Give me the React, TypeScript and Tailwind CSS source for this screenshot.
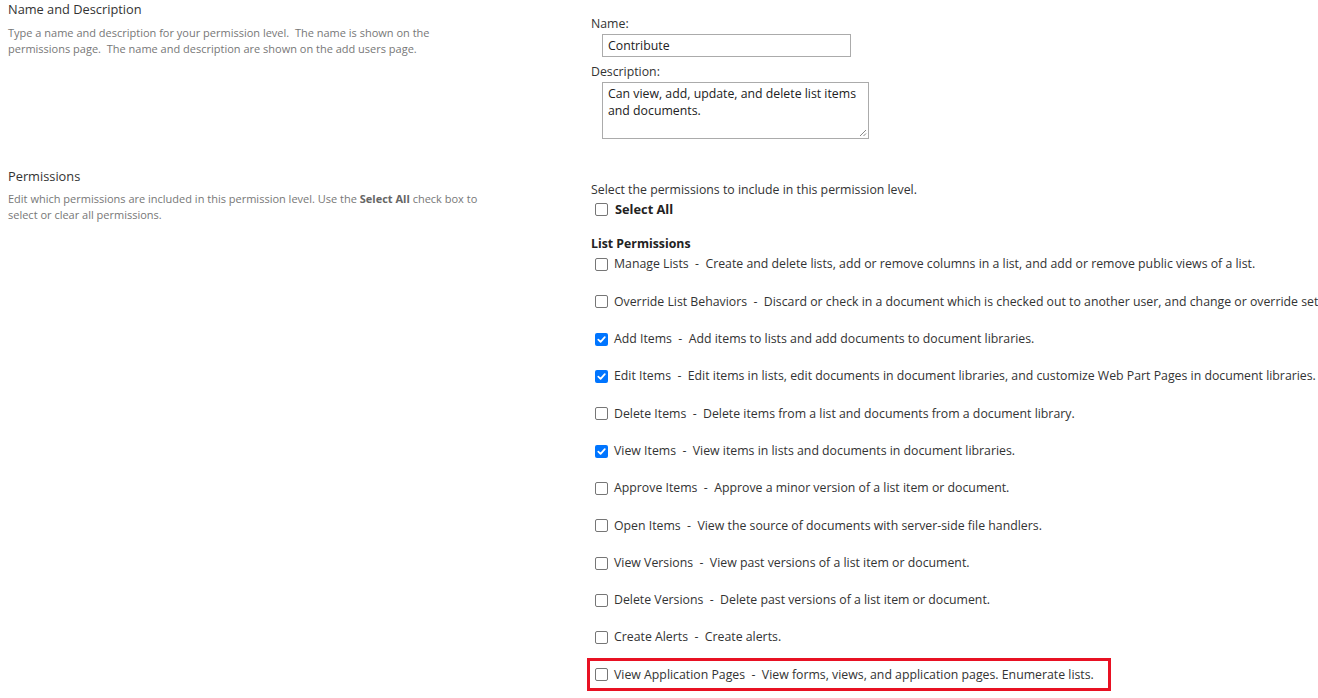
import React from "react";

const perms = [
  { name: "Manage Lists", desc: "Create and delete lists, add or remove columns in a list, and add or remove public views of a list.", on: false },
  { name: "Override List Behaviors", desc: "Discard or check in a document which is checked out to another user, and change or override settings which allow users to read/edit only their own items.", on: false },
  { name: "Add Items", desc: "Add items to lists and add documents to document libraries.", on: true },
  { name: "Edit Items", desc: "Edit items in lists, edit documents in document libraries, and customize Web Part Pages in document libraries.", on: true },
  { name: "Delete Items", desc: "Delete items from a list and documents from a document library.", on: false },
  { name: "View Items", desc: "View items in lists and documents in document libraries.", on: true },
  { name: "Approve Items", desc: "Approve a minor version of a list item or document.", on: false },
  { name: "Open Items", desc: "View the source of documents with server-side file handlers.", on: false },
  { name: "View Versions", desc: "View past versions of a list item or document.", on: false },
  { name: "Delete Versions", desc: "Delete past versions of a list item or document.", on: false },
  { name: "Create Alerts", desc: "Create alerts.", on: false },
];

function Box({ on }: { on: boolean }) {
  if (on) {
    return (
      <span className="flex h-[13px] w-[13px] shrink-0 items-center justify-center rounded-[2px] bg-[#0075ff]">
        <svg viewBox="0 0 12 12" className="h-[11px] w-[11px]">
          <path d="M2.5 6.2 L5 8.6 L9.6 3.4" fill="none" stroke="#fff" strokeWidth="1.9" strokeLinecap="round" strokeLinejoin="round" />
        </svg>
      </span>
    );
  }
  return <span className="h-[13px] w-[13px] shrink-0 rounded-[2px] border border-[#767676] bg-white" />;
}

function Row({ name, desc, on }: { name: string; desc: string; on: boolean }) {
  return (
    <div className="flex h-[37.3px] items-center gap-[6px] pl-[4px] whitespace-nowrap">
      <Box on={on} />
      <span>
        {name}&nbsp;&nbsp;-&nbsp;&nbsp;{desc}
      </span>
    </div>
  );
}

export default function App() {
  return (
    <div
      className="flex h-[698px] w-[1318px] overflow-hidden bg-white text-[12.3px] text-[#444]"
      style={{ fontFamily: '"Segoe UI", "Open Sans", sans-serif' }}
    >
      {/* left: section labels */}
      <div className="w-[590px] shrink-0 pl-[8px]">
        <div className="pt-[1px] text-[12.8px] leading-[17px] text-[#333]">Name and Description</div>
        <p className="mt-[7px] w-[440px] text-[11px] leading-[16px] text-[#777]">
          Type a name and description for your permission level.&nbsp; The name is shown on the permissions page.&nbsp; The name and description are shown on the add users page.
        </p>
        <div className="mt-[111px] text-[12.8px] leading-[17px] text-[#333]">Permissions</div>
        <p className="mt-[6px] w-[480px] text-[11px] leading-[16px] text-[#777]">
          Edit which permissions are included in this permission level. Use the <b className="text-[#666]">Select All</b> check box to select or clear all permissions.
        </p>
      </div>

      {/* right: form fields */}
      <div className="flex-1 pl-[1px] text-[#333]">
        <div className="pt-[15px] leading-[17px]">Name:</div>
        <div className="mt-[2px] ml-[11px] flex h-[23px] w-[249px] items-center border border-[#ababab] px-[5px] pt-[1px] text-[#222]">
          Contribute
        </div>
        <div className="mt-[6px] leading-[17px]">Description:</div>
        <div className="relative mt-[2px] ml-[11px] h-[57px] w-[267px] border border-[#ababab] px-[5px] pt-[2px] leading-[17px] text-[#222]">
          Can view, add, update, and delete list items and documents.
          <svg viewBox="0 0 8 8" className="absolute bottom-[1px] right-[1px] h-[8px] w-[8px]">
            <path d="M7 1 L1 7 M7 4.5 L4.5 7" stroke="#888" strokeWidth="1" />
          </svg>
        </div>

        <div className="mt-[42px] leading-[17px]">Select the permissions to include in this permission level.</div>
        <div className="mt-[2px] flex items-center gap-[7px] pl-[4px] leading-[18px]">
          <Box on={false} />
          <b className="text-[12.8px] text-[#222]">Select All</b>
        </div>
        <div className="mt-[17px] font-bold leading-[17px] text-[#222]">List Permissions</div>
        <div className="mt-[-6px]">
          {perms.map((p) => (
            <Row key={p.name} {...p} />
          ))}
          <div className="-ml-[4px] mt-[2px] flex h-[33px] w-[524px] items-center gap-[6px] border-[3px] border-[#e81123] pl-[5px] whitespace-nowrap">
            <Box on={false} />
            <span>View Application Pages&nbsp;&nbsp;-&nbsp;&nbsp;View forms, views, and application pages. Enumerate lists.</span>
          </div>
        </div>
      </div>
    </div>
  );
}
